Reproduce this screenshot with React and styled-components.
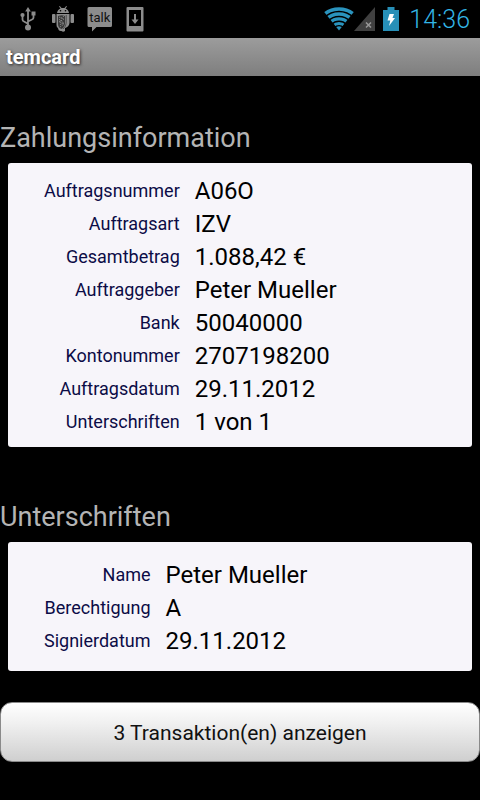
import React from 'react'
import styled, { createGlobalStyle } from 'styled-components'

const GlobalStyle = createGlobalStyle`
    body {
        margin: 0;
        background: #000;
        font-family: Roboto, "Liberation Sans", sans-serif;
    }
`

const StatusBar = styled.header`
    display: flex;
    justify-content: space-between;
    height: 38px;
    padding: 0 10px 0 20px;
    background: #000;
`

const StatusGroup = styled.div`
    display: flex;
    align-items: center;
    gap: ${props => props.$gap}px;

    svg {
        display: block;
    }
`

const Clock = styled.time`
    margin-left: 2px;
    padding-top: 2px;
    color: #33b5e5;
    font-size: 25px;
    font-weight: 300;
    line-height: 36px;
`

const TitleBar = styled.h1`
    margin: 0;
    padding: 0 6px;
    background: linear-gradient(#9c9c9c, #7e7e7e);
    color: #fff;
    font-size: 20px;
    font-weight: 700;
    line-height: 38px;
    text-shadow: 1px 1px 3px rgba(0, 0, 0, 0.7);
`

const Section = styled.section`
    padding-top: 44px;

    & + & {
        padding-top: 52px;
    }
`

const SectionTitle = styled.h2`
    margin: 0 0 7px;
    color: #b4b4b4;
    font-size: 27px;
    font-weight: 400;
    line-height: 36px;
`

const Card = styled.div`
    margin: 0 8px;
    padding: ${props => (props.$roomy ? '16px 0 14px 36px' : '11px 0 9px 36px')};
    border-radius: 3px;
    background: #f7f5fa;
`

const Details = styled.table`
    border-collapse: collapse;
`

const Label = styled.th`
    height: 33px;
    padding: 0 15px 0 0;
    color: #0c0c46;
    font-size: 18px;
    font-weight: 400;
    line-height: 33px;
    text-align: right;
`

const Value = styled.td`
    padding: 2px 0 0;
    color: #000;
    font-size: 24px;
    line-height: 31px;
`

const ShowButton = styled.button`
    display: block;
    width: 100%;
    height: 60px;
    margin-top: 31px;
    padding: 2px 6px 0;
    border: 1px solid #8a8a8a;
    border-radius: 12px;
    background: linear-gradient(#fff, #f0f0f0 35%, #cfcfcf);
    color: #111;
    font-family: inherit;
    font-size: 21px;
    cursor: pointer;
`

const payment = [
    ['Auftragsnummer', 'A06O'],
    ['Auftragsart', 'IZV'],
    ['Gesamtbetrag', '1.088,42 €'],
    ['Auftraggeber', 'Peter Mueller'],
    ['Bank', '50040000'],
    ['Kontonummer', '2707198200'],
    ['Auftragsdatum', '29.11.2012'],
    ['Unterschriften', '1 von 1'],
]

const signature = [
    ['Name', 'Peter Mueller'],
    ['Berechtigung', 'A'],
    ['Signierdatum', '29.11.2012'],
]

const UsbIcon = () => (
    <svg width="16" height="24" viewBox="0 0 16 24" fill="none" stroke="#8c8c8c" strokeWidth="1.8">
        <path d="M8 3V20M2.5 9v3.5q0 1.5 1.5 2l4 2.3M13.5 7v3.5q0 1.5-1.5 2L8 14.5" />
        <path d="M8 0l2.8 4.500H5.200z" fill="#8c8c8c" stroke="none" />
        <circle cx="2.5" cy="8" r="2.1" fill="#8c8c8c" stroke="none" />
        <rect x="11.5" y="4.5" width="4" height="4" fill="#8c8c8c" stroke="none" />
        <circle cx="8" cy="20.5" r="3" fill="#8c8c8c" stroke="none" />
    </svg>
)

const DebugIcon = () => (
    <svg width="25" height="26" viewBox="-3 0 25 26" fill="#8c8c8c">
        <path d="M5 7q.5-3.5 3.5-4.500L7 .6l.8-.5 1.700 2h3l1.700-2 .8.5-1.500 1.900Q16.500 3.500 17 7z" />
        <rect x="0" y="8" width="3.5" height="9" rx="1" />
        <rect x="18.5" y="8" width="3.5" height="9" rx="1" />
        <path d="M4.500 8h13v9q-.5 4-4.500 5v3q-2 1.300-3.500 0-3 .5-3.500-3-1.500-.5-1.500-3z" />
        <path d="M6 10q4-1.500 7 0v8q-1 4-3.500 5Q6 22 6 18z" fill="#393939" />
        <path d="M7 11l5 2-5 3 5 2-4 3M12 10l-5 4 5 3-5 2" fill="none" stroke="#858585" strokeWidth="1" strokeDasharray="1.5 1" />
        <path d="M14.200 9v8q0 3-3 6" fill="none" stroke="#333" strokeWidth=".7" />
        <circle cx="8.5" cy="4.8" r=".8" fill="#000" />
        <circle cx="13.5" cy="4.8" r=".8" fill="#000" />
    </svg>
)

const TalkIcon = () => (
    <svg width="26" height="25" viewBox="0 0 26 25">
        <path d="M2 0h21.500q1.500 0 1.500 1.500v17q0 1.500-1.500 1.500H9.500L5 24.500V20H2Q.5 20 .5 18.500v-17Q.5 0 2 0z" fill="#8c8c8c" />
        <text x="12.7" y="15" textAnchor="middle" fontSize="13" fill="#111">talk</text>
    </svg>
)

const DownloadIcon = () => (
    <svg width="18" height="25" viewBox="0 0 18 25">
        <path fillRule="evenodd" d="M1.500 0h15q1 0 1 1v22.500q0 1-1 1h-15q-1 0-1-1V1q0-1 1-1zM3 3v16h12V3z" fill="#8c8c8c" />
        <path d="M9 7v8" stroke="#8c8c8c" strokeWidth="2" />
        <path d="M5.500 12.500h7L9 17z" fill="#8c8c8c" />
    </svg>
)

const WifiIcon = () => (
    <svg width="30" height="24" viewBox="0 0 30 24">
        <clipPath id="wifi-fan">
            <path d="M-1 3.500L15 23.500 31 3.500V-1H-1z" />
        </clipPath>
        <g clipPath="url(#wifi-fan)" fill="none" stroke="#2a93bd" strokeWidth="3.4">
            <circle cx="15" cy="25" r="23" />
            <circle cx="15" cy="25" r="18" />
            <circle cx="15" cy="25" r="13.1" />
            <circle cx="15" cy="25" r="8.5" strokeWidth="3" />
            <circle cx="15" cy="25" r="5.8" fill="#2a93bd" stroke="none" />
        </g>
    </svg>
)

const SignalIcon = () => (
    <svg width="21" height="24" viewBox="0 0 21 24">
        <path d="M21 0v24H0z" fill="#404040" />
        <path d="M12 15.500l5 5M17 15.500l-5 5" stroke="#999" strokeWidth="1.5" />
    </svg>
)

const BatteryIcon = () => (
    <svg width="16" height="24" viewBox="0 0 16 24">
        <path d="M4.500 0h7v3H16v21H0V3h4.500z" fill="#278fb7" />
        <path d="M6.500 7H11L9.500 11H12L6 19l1.300-5.500H4.500z" fill="#fff" />
    </svg>
)

const DetailCard = ({ rows, roomy }) => (
    <Card $roomy={roomy}>
        <Details>
            <tbody>
                {rows.map(([label, value]) => (
                    <tr key={label}>
                        <Label scope="row">{label}</Label>
                        <Value>{value}</Value>
                    </tr>
                ))}
            </tbody>
        </Details>
    </Card>
)

const App = () => {
    return (
        <>
            <GlobalStyle />
            <StatusBar>
                <StatusGroup $gap={13}>
                    <UsbIcon />
                    <DebugIcon />
                    <TalkIcon />
                    <DownloadIcon />
                </StatusGroup>
                <StatusGroup $gap={8}>
                    <StatusGroup $gap={0}>
                        <WifiIcon />
                        <SignalIcon />
                    </StatusGroup>
                    <BatteryIcon />
                    <Clock>14:36</Clock>
                </StatusGroup>
            </StatusBar>
            <TitleBar>temcard</TitleBar>
            <main>
                <Section>
                    <SectionTitle>Zahlungsinformation</SectionTitle>
                    <DetailCard rows={payment} />
                </Section>
                <Section>
                    <SectionTitle>Unterschriften</SectionTitle>
                    <DetailCard rows={signature} roomy />
                </Section>
                <ShowButton type="button">3 Transaktion(en) anzeigen</ShowButton>
            </main>
        </>
    )
}

export default App
